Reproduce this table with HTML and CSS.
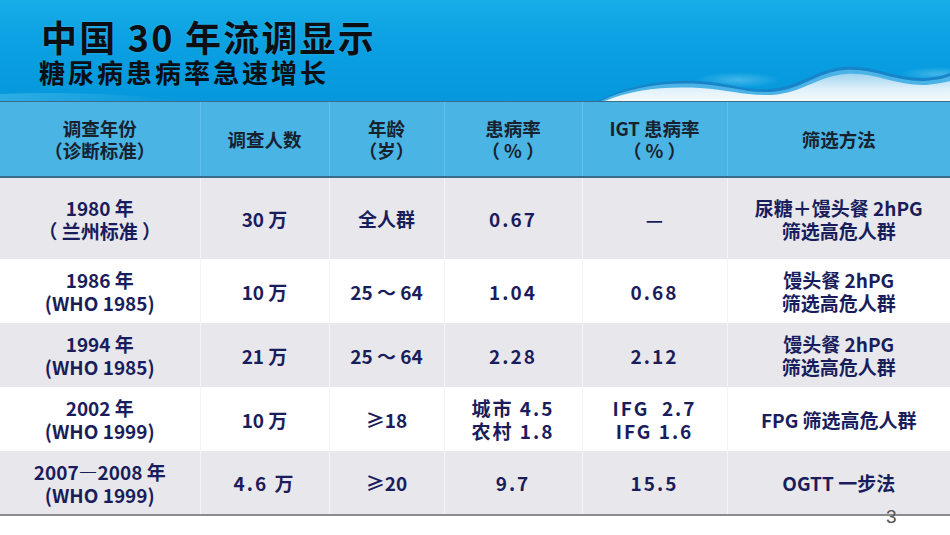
FILE: index.html
```html
<!DOCTYPE html>
<html lang="zh">
<head>
<meta charset="utf-8">
<title>中国 30 年流调显示</title>
<link rel="stylesheet" href="styles.css">
</head>
<body>
<div class="slide">
  <header class="banner">
    <svg class="wave" viewBox="0 0 950 101" width="950" height="101" aria-hidden="true">
      <defs>
        <linearGradient id="foam" x1="0" y1="0" x2="0" y2="1">
          <stop offset="0" stop-color="#9fd4f0"/>
          <stop offset="0.55" stop-color="#dff0fa"/>
          <stop offset="1" stop-color="#f5fafd"/>
        </linearGradient>
        <linearGradient id="leftfoam" x1="0" y1="0" x2="1" y2="0">
          <stop offset="0" stop-color="#4fbdea" stop-opacity="0.55"/>
          <stop offset="1" stop-color="#4fbdea" stop-opacity="0"/>
        </linearGradient>
        <radialGradient id="glow" cx="0.5" cy="0.5" r="0.5">
          <stop offset="0" stop-color="#5cc2ee" stop-opacity="0.7"/>
          <stop offset="1" stop-color="#5cc2ee" stop-opacity="0"/>
        </radialGradient>
      </defs>
      <path d="M0 94 C60 92 120 93 180 101 L0 101 Z" fill="url(#leftfoam)"/>
      <ellipse cx="738" cy="80" rx="42" ry="8" fill="url(#glow)"/>
      <ellipse cx="938" cy="74" rx="38" ry="7" fill="url(#glow)"/>
      <path d="M598 101 C625 86 660 79 700 81 C730 83 745 91 770 89 C800 87 815 69 845 67 C875 65 895 79 925 78 C938 77 945 75 950 73 L950 101 Z" fill="#1784ca"/>
      <path d="M601 101 C628 88 661 82 700 84 C730 86 746 93 771 92 C801 90 817 72 845 70 C875 68 895 82 925 81 C938 80 945 78 950 76 L950 101 Z" fill="#4cb3e6"/>
      <path d="M605 101 C631 90 663 86 700 88 C730 90 746 96 772 95 C802 93 818 76 846 74 C876 72 896 86 926 85 C938 84 945 82 950 81 L950 101 Z" fill="url(#foam)"/>
    </svg>
    <h1 class="title">中国 30 年流调显示</h1>
    <h2 class="subtitle">糖尿病患病率急速增长</h2>
  </header>

  <table class="data">
    <colgroup>
      <col class="c1"><col class="c2"><col class="c3"><col class="c4"><col class="c5"><col class="c6">
    </colgroup>
    <thead>
      <tr>
        <th>调查年份<br>（诊断标准）</th>
        <th>调查人数</th>
        <th>年龄<br>（岁）</th>
        <th>患病率<br>（ % ）</th>
        <th>IGT 患病率<br>（ % ）</th>
        <th>筛选方法</th>
      </tr>
    </thead>
    <tbody>
      <tr class="tall shade">
        <td>1980 年<br>（ 兰州标准 ）</td>
        <td>30 万</td>
        <td>全人群</td>
        <td class="num">0.67</td>
        <td>—</td>
        <td>尿糖＋馒头餐 2hPG<br>筛选高危人群</td>
      </tr>
      <tr>
        <td>1986 年<br>(WHO 1985)</td>
        <td>10 万</td>
        <td>25 ～ 64</td>
        <td class="num">1.04</td>
        <td class="num">0.68</td>
        <td>馒头餐 2hPG<br>筛选高危人群</td>
      </tr>
      <tr class="shade">
        <td>1994 年<br>(WHO 1985)</td>
        <td>21 万</td>
        <td>25 ～ 64</td>
        <td class="num">2.28</td>
        <td class="num">2.12</td>
        <td>馒头餐 2hPG<br>筛选高危人群</td>
      </tr>
      <tr>
        <td>2002 年<br>(WHO 1999)</td>
        <td>10 万</td>
        <td>≥18</td>
        <td class="num">城市 4.5<br>农村 1.8</td>
        <td class="num pre">IFG  2.7<br>IFG 1.6</td>
        <td>FPG 筛选高危人群</td>
      </tr>
      <tr class="shade">
        <td>2007—2008 年<br>(WHO 1999)</td>
        <td class="num">4.6 万</td>
        <td>≥20</td>
        <td class="num">9.7</td>
        <td class="num">15.5</td>
        <td>OGTT 一步法</td>
      </tr>
    </tbody>
  </table>
  <div class="page-no">3</div>
</div>
</body>
</html>
```

FILE: styles.css
```css
* { box-sizing: border-box; }

html, body {
  margin: 0;
  padding: 0;
  background: #ffffff;
}

.slide {
  position: relative;
  width: 950px;
  height: 535px;
  overflow: hidden;
  font-family: "Noto Sans CJK SC", "Liberation Sans", sans-serif;
}

.banner {
  position: relative;
  height: 102px;
  padding: 15px 0 0 41px;
  background: linear-gradient(180deg, #17ade7 0%, #0aa0e2 45%, #0598dc 100%);
  border-bottom: 1px solid #3e6b88;
}

.wave {
  position: absolute;
  left: 0;
  bottom: 0;
  display: block;
}

.title {
  position: relative;
  margin: 0;
  font-size: 36px;
  line-height: 42px;
  font-weight: 700;
  color: #0b0f14;
  letter-spacing: 2.2px;
  text-shadow: 0 0 2px rgba(120, 200, 240, 0.6);
}

.subtitle {
  position: relative;
  margin: 0 0 0 -2px;
  font-size: 26px;
  line-height: 30px;
  font-weight: 700;
  color: #0b0f14;
  letter-spacing: 3px;
}

.data {
  width: 950px;
  border-collapse: collapse;
  table-layout: fixed;
  color: #1a1d5c;
  font-weight: 700;
  font-size: 19px;
  line-height: 23px;
  text-align: center;
}

.c1 { width: 200px; }
.c2 { width: 129px; }
.c3 { width: 115px; }
.c4 { width: 138px; }
.c5 { width: 145px; }
.c6 { width: 223px; }

.data th {
  height: 75px;
  padding: 0;
  background: #4ab4e4;
  color: #17222e;
  font-size: 18.5px;
  line-height: 22px;
  font-weight: 700;
  border-left: 1px solid #62c0ea;
  border-bottom: 2px solid #3a6b88;
  vertical-align: middle;
}

.data th:first-child,
.data td:first-child { border-left: none; }

.data td {
  height: 64px;
  padding: 0;
  background: #ffffff;
  border-left: 1px solid #f4f4f6;
  vertical-align: middle;
}

.data tr.shade td {
  background: #e8e8ec;
}

.data tr.tall td { height: 82px; }

.data tbody tr:last-child td {
  border-bottom: 2px solid #8c8c8c;
}

.num { letter-spacing: 2px; }

.pre { white-space: pre; }

.page-no {
  position: absolute;
  left: 886px;
  top: 506px;
  font-family: "Liberation Sans", sans-serif;
  font-size: 19px;
  line-height: 22px;
  color: #555555;
}
```
